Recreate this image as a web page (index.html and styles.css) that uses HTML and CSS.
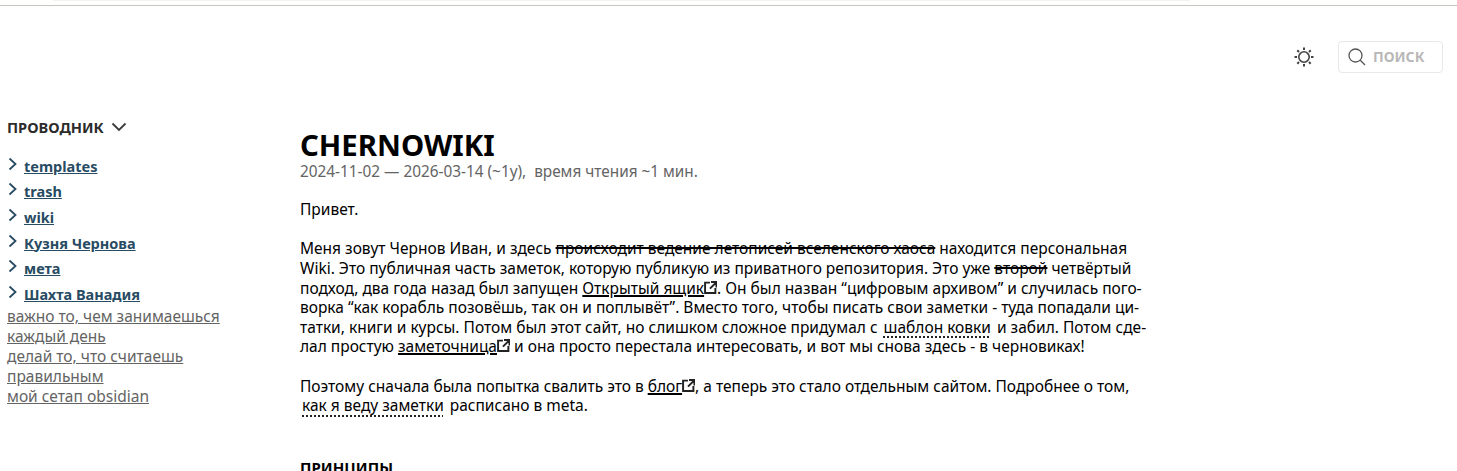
FILE: index.html
```html
<!DOCTYPE html>
<html lang="ru">

<head>
    <meta charset="UTF-8" />
    <title>CHERNOWIKI</title>
    <link rel="stylesheet" href="styles.css">
</head>

<body>
    <div class="top-strip"></div>
    <div class="top-line"></div>

    <div class="page">
        <aside class="sidebar">
            <div class="explorer-title">
                <span>ПРОВОДНИК</span>
                <svg class="fold-icon" viewBox="0 0 16 10"><path d="M1.5 1.5 8 8l6.500-6.500" /></svg>
            </div>
            <ul class="folders">
                <li><svg class="folder-icon" viewBox="0 0 9 14"><path d="M1.500 1.500 7.500 7l-6 5.500" /></svg><a href="#">templates</a></li>
                <li><svg class="folder-icon" viewBox="0 0 9 14"><path d="M1.500 1.500 7.500 7l-6 5.500" /></svg><a href="#">trash</a></li>
                <li><svg class="folder-icon" viewBox="0 0 9 14"><path d="M1.500 1.500 7.500 7l-6 5.500" /></svg><a href="#">wiki</a></li>
                <li><svg class="folder-icon" viewBox="0 0 9 14"><path d="M1.500 1.500 7.500 7l-6 5.500" /></svg><a href="#">Кузня Чернова</a></li>
                <li><svg class="folder-icon" viewBox="0 0 9 14"><path d="M1.500 1.500 7.500 7l-6 5.500" /></svg><a href="#">мета</a></li>
                <li><svg class="folder-icon" viewBox="0 0 9 14"><path d="M1.500 1.500 7.500 7l-6 5.500" /></svg><a href="#">Шахта Ванадия</a></li>
            </ul>
            <ul class="pages">
                <li><a href="#">важно то, чем занимаешься каждый день</a></li>
                <li><a href="#">делай то, что считаешь правильным</a></li>
                <li><a href="#">мой сетап obsidian</a></li>
            </ul>
        </aside>

        <main class="content">
            <h1>CHERNOWIKI</h1>
            <p class="meta">2024-11-02 — 2026-03-14 (~1y),&nbsp; время чтения ~1 мин.</p>

            <p>Привет.</p>

            <p>Меня зовут Чернов Иван, и здесь <s>происходит ведение летописей вселенского хаоса</s> находится персональная<br>
            Wiki. Это публичная часть заметок, которую публикую из приватного репозитория. Это уже <s>второй</s> четвёртый<br>
            подход, два года назад был запущен <a class="external" href="#">Открытый ящик<svg class="external-icon" viewBox="0 0 12 12"><path d="M5.500 1.500H1v9.500h9.500V6.500M6.500 1h5v5M11.500 1 5.500 7" /></svg></a>. Он был назван “цифровым архивом” и случилась пого-<br>
            ворка “как корабль позовёшь, так он и поплывёт”. Вместо того, чтобы писать свои заметки - туда попадали ци-<br>
            татки, книги и курсы. Потом был этот сайт, но слишком сложное придумал с <a class="internal" href="#">шаблон ковки</a> и забил. Потом сде-<br>
            лал простую <a class="external" href="#">заметочница<svg class="external-icon" viewBox="0 0 12 12"><path d="M5.500 1.500H1v9.500h9.500V6.500M6.500 1h5v5M11.500 1 5.500 7" /></svg></a> и она просто перестала интересовать, и вот мы снова здесь - в черновиках!</p>

            <p>Поэтому сначала была попытка свалить это в <a class="external" href="#">блог<svg class="external-icon" viewBox="0 0 12 12"><path d="M5.500 1.500H1v9.500h9.500V6.500M6.500 1h5v5M11.500 1 5.500 7" /></svg></a>, а теперь это стало отдельным сайтом. Подробнее о том,<br>
            <a class="internal" href="#">как я веду заметки</a> расписано в meta.</p>

            <h2>ПРИНЦИПЫ</h2>
        </main>

        <div class="toolbar">
            <svg class="theme-icon" viewBox="0 0 20 20">
                <circle cx="10" cy="10" r="5.200" />
                <path class="rays" d="M10 0.500V3M10 17v2.500M0.500 10H3M17 10h2.500M3.300 3.300 5 5M15 15l1.700 1.700M3.300 16.700 5 15M15 5l1.700-1.700" />
            </svg>
            <div class="search">
                <svg class="search-icon" viewBox="0 0 18 18"><circle cx="7.500" cy="7.500" r="6.500" /><path d="M12.300 12.300 17 17" /></svg>
                <span>ПОИСК</span>
            </div>
        </div>
    </div>
</body>

</html>
```

FILE: styles.css
```css
body {
    font-family: "Noto Sans", Arial, sans-serif;
    background: #fff;
    color: #000;
    margin: 0;
    height: 471px;
    overflow: hidden;
    font-size: 15.500px;
    line-height: 20px;
}

.top-strip {
    height: 1px;
    margin: 0 267px 0 53px;
    background: #f2f2f0;
}

.top-line {
    height: 1px;
    margin-top: 4px;
    background: #c6c6c0;
}

.page {
    display: grid;
    grid-template-columns: 300px 842px 1fr;
    height: 465px;
}

.sidebar {
    padding: 110px 60px 0 7px;
}

.explorer-title {
    display: flex;
    align-items: center;
    gap: 7px;
    height: 22px;
    color: #2b2b2b;
    font-weight: 700;
    font-size: 14.600px;
}

.fold-icon {
    width: 16px;
    height: 10px;
    fill: none;
    stroke: #3a3a3a;
    stroke-width: 1.800;
}

.folders {
    list-style: none;
    margin: 15px 0 0;
    padding: 0;
}

.folders li {
    display: flex;
    align-items: center;
    height: 25.600px;
    padding-left: 1px;
}

.folders a {
    color: #284b63;
    font-weight: 700;
    font-size: 14.500px;
}

.folder-icon {
    width: 9px;
    height: 14px;
    margin-right: 7px;
    margin-top: -4px;
    fill: none;
    stroke: #284b63;
    stroke-width: 1.800;
}

.pages {
    list-style: none;
    margin: -1px 0 0;
    padding: 0;
}

.pages a {
    color: #646464;
}

.content {
    padding-top: 122px;
    line-height: 19.600px;
    white-space: nowrap;
}

h1 {
    margin: 0;
    font-size: 29.400px;
    line-height: 34px;
    font-weight: 700;
}

.content .meta {
    margin: 0 0 18.600px;
    color: #646464;
    font-size: 15.350px;
}

.content p {
    margin-top: 0;
    margin-bottom: 19.600px;
}

.content a {
    color: #000;
}

.content s {
    text-decoration-thickness: 1.500px;
}

.external {
    text-decoration-thickness: 2px;
}

.external-icon {
    width: 13px;
    height: 13px;
    vertical-align: 0;
    fill: none;
    stroke: #222;
    stroke-width: 1.800;
}

.content .internal {
    margin: 0 2px;
    text-decoration: underline dotted 2px #222;
    text-underline-offset: 4px;
}

h2 {
    margin: 41px 0 0;
    font-size: 15px;
    line-height: 20px;
    font-weight: 700;
}

.toolbar {
    display: flex;
    align-items: flex-start;
    gap: 24px;
    padding-top: 35px;
    justify-content: flex-end;
    padding-right: 14px;
}

.theme-icon {
    width: 20px;
    height: 20px;
    margin-top: 6px;
    fill: none;
    stroke: #444;
    stroke-width: 1.600;
}

.rays {
    stroke-width: 2;
}

.search {
    display: flex;
    align-items: center;
    gap: 7px;
    box-sizing: border-box;
    width: 105px;
    height: 32px;
    padding-left: 9px;
    border: 1px solid #e8e8e4;
    border-radius: 4px;
    color: #b8b8b8;
    font-weight: 700;
    font-size: 14px;
}

.search-icon {
    width: 18px;
    height: 18px;
    fill: none;
    stroke: #555;
    stroke-width: 1.300;
}
```
